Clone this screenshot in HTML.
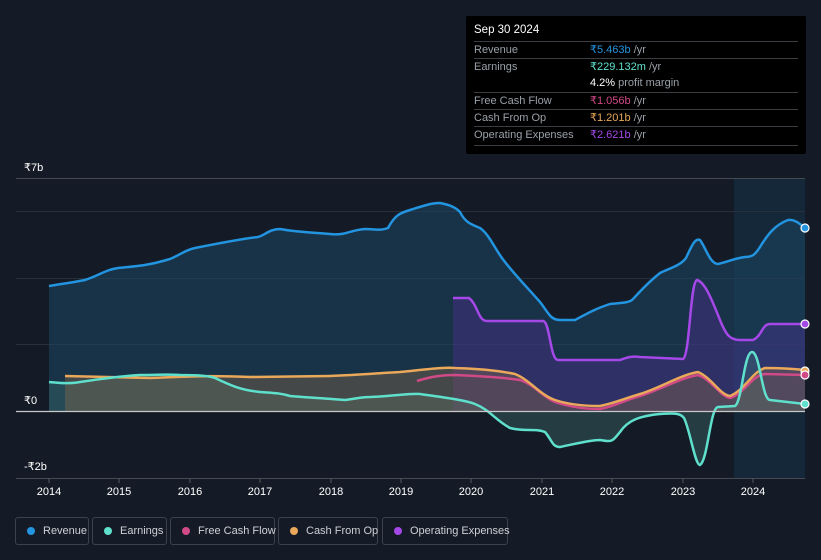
<!DOCTYPE html>
<html><head><meta charset="utf-8"><style>
body{margin:0;background:#151b26;font-family:"Liberation Sans",sans-serif;}
.wrap{position:relative;width:821px;height:560px;overflow:hidden;background:#151b26}
.tip{position:absolute;left:466px;top:16px;width:340px;height:138px;background:#000;border-radius:2px;font-size:11px;color:#9aa0a8}
.tip .h{position:absolute;left:8px;top:8px;color:#fff;font-size:11.5px}
.row{position:absolute;left:8px;width:324px;border-top:1px solid #3a3d42;height:17px;line-height:17px;white-space:nowrap}
.row .v{position:absolute;left:116px;top:0}
.leg{position:absolute;top:517px;height:28px;border:1px solid #3c424c;border-radius:3px;color:#cdd1d6;font-size:11px;line-height:27px;box-sizing:border-box;white-space:nowrap}
.leg i{position:absolute;left:11px;top:9px;width:8px;height:8px;border-radius:50%}
.leg span{position:absolute;left:27px}
</style></head><body><div class="wrap">
<svg width="821" height="560" style="position:absolute;left:0;top:0">
<defs><clipPath id="c"><rect x="16" y="178" width="789" height="300"/></clipPath></defs>
<rect x="734" y="178" width="71" height="300" fill="#14283a"/>
<g stroke="#2a303a" stroke-width="1"><line x1="16" y1="178.5" x2="805" y2="178.5" stroke="#454a52"/><line x1="16" y1="211.5" x2="805" y2="211.5"/><line x1="16" y1="278.5" x2="805" y2="278.5"/><line x1="16" y1="344.5" x2="805" y2="344.5"/><line x1="16" y1="478.5" x2="805" y2="478.5" stroke="#454a52"/></g>
<g clip-path="url(#c)">
<path d="M49,411 L49,286 C60,284 70,283 85,280 C100,275 105,270 118,268 C140,266 150,265 170,259 C180,255 185,250 195,248 C215,244 240,239 258,237 C265,235 270,229 280,229 C295,232 320,233 330,234 C345,236 350,230 365,229 C375,229 380,231 388,228 C395,215 400,213 410,210 C420,207 430,203 440,203 C450,205 455,207 460,212 C465,222 470,224 480,228 C490,235 495,250 505,262 C515,275 525,285 540,302 C548,312 550,320 560,320 L575,320 C590,312 595,309 610,304 C620,303 628,303 632,300 C640,292 645,285 660,273 C670,268 680,266 686,258 C692,245 695,238 700,240 C706,248 710,264 718,264 C728,262 735,258 745,257 C752,257 755,255 760,247 C768,234 775,225 788,220 C795,219 800,224 805,228 L805,411 Z" fill="#1c4562" fill-opacity=".55"/>
<path d="M453,411 L453,298 L469,298 C478,305 478,321 487,321 L543,321 C550,321 550,360 558,360 L620,360 C628,357 632,356 640,357 L683,359 C690,355 690,282 697,280 C705,282 712,300 720,320 C726,335 730,340 740,340 L753,340 C762,336 762,324 770,324 L805,324 L805,411 Z" fill="#5a2fa0" fill-opacity=".35"/>
<path d="M49,411 L49,382 C60,383 70,384 80,382 C100,379 120,376 140,375 C160,375 165,374 180,375 C200,375 210,376 215,378 C230,385 240,390 260,392 C275,393 280,393 290,396 C300,397 320,398 345,400 C355,399 360,397 370,397 C395,396 410,393 420,394 C440,397 465,400 475,404 C490,410 495,420 510,428 C525,432 535,428 545,432 C552,440 552,447 560,447 C575,444 590,440 600,440 C612,442 612,442 620,432 C628,420 640,416 660,414 C675,413 680,413 684,418 C690,430 695,465 700,465 C708,460 710,408 718,407 L735,406 C742,402 744,352 752,352 C760,352 762,400 770,400 L805,404 L805,411 Z" fill="#3d6e6e" fill-opacity=".4"/>
<path d="M65,411 L65,376 L150,378 C180,377 200,375 250,377 L330,376 C360,375 380,373 400,372 C430,369 445,367 455,368 C480,369 495,370 515,374 C530,380 540,395 555,400 C570,405 585,406 600,406 C615,403 620,400 640,394 C660,388 680,375 698,372 C712,378 720,395 730,396 C745,390 752,372 765,368 C780,368 795,369 805,370 L805,411 Z" fill="#8a6a4a" fill-opacity=".4"/>
<path d="M49,286 C60,284 70,283 85,280 C100,275 105,270 118,268 C140,266 150,265 170,259 C180,255 185,250 195,248 C215,244 240,239 258,237 C265,235 270,229 280,229 C295,232 320,233 330,234 C345,236 350,230 365,229 C375,229 380,231 388,228 C395,215 400,213 410,210 C420,207 430,203 440,203 C450,205 455,207 460,212 C465,222 470,224 480,228 C490,235 495,250 505,262 C515,275 525,285 540,302 C548,312 550,320 560,320 L575,320 C590,312 595,309 610,304 C620,303 628,303 632,300 C640,292 645,285 660,273 C670,268 680,266 686,258 C692,245 695,238 700,240 C706,248 710,264 718,264 C728,262 735,258 745,257 C752,257 755,255 760,247 C768,234 775,225 788,220 C795,219 800,224 805,228" fill="none" stroke="#2394df" stroke-width="2.5"/>
<path d="M453,298 L469,298 C478,305 478,321 487,321 L543,321 C550,321 550,360 558,360 L620,360 C628,357 632,356 640,357 L683,359 C690,355 690,282 697,280 C705,282 712,300 720,320 C726,335 730,340 740,340 L753,340 C762,336 762,324 770,324 L805,324" fill="none" stroke="#a548e8" stroke-width="2.5"/>
<path d="M417,381 C430,377 440,375 455,375 C480,376 500,377 520,380 C535,385 540,395 555,402 C570,407 585,409 600,409 C615,406 620,402 640,396 C660,390 680,378 698,375 C712,380 720,396 730,398 C745,393 752,375 765,374 L805,375" fill="none" stroke="#cf4a87" stroke-width="2.5"/>
<path d="M65,376 L150,378 C180,377 200,375 250,377 L330,376 C360,375 380,373 400,372 C430,369 445,367 455,368 C480,369 495,370 515,374 C530,380 540,395 555,400 C570,405 585,406 600,406 C615,403 620,400 640,394 C660,388 680,375 698,372 C712,378 720,395 730,396 C745,390 752,372 765,368 C780,368 795,369 805,370" fill="none" stroke="#e9a85a" stroke-width="2.5"/>
<path d="M49,382 C60,383 70,384 80,382 C100,379 120,376 140,375 C160,375 165,374 180,375 C200,375 210,376 215,378 C230,385 240,390 260,392 C275,393 280,393 290,396 C300,397 320,398 345,400 C355,399 360,397 370,397 C395,396 410,393 420,394 C440,397 465,400 475,404 C490,410 495,420 510,428 C525,432 535,428 545,432 C552,440 552,447 560,447 C575,444 590,440 600,440 C612,442 612,442 620,432 C628,420 640,416 660,414 C675,413 680,413 684,418 C690,430 695,465 700,465 C708,460 710,408 718,407 L735,406 C742,402 744,352 752,352 C760,352 762,400 770,400 L805,404" fill="none" stroke="#5fe0cc" stroke-width="2.5"/>
</g>
<line x1="16" y1="411.5" x2="805" y2="411.5" stroke="#c8c8c8" stroke-width="1.2"/>
<g stroke="#fff" stroke-width="1.2"><circle cx="805" cy="228" r="4" fill="#2394df"/><circle cx="805" cy="324" r="4" fill="#a548e8"/><circle cx="805" cy="371" r="4" fill="#e9a85a"/><circle cx="805" cy="375" r="4" fill="#cf4a87"/><circle cx="805" cy="404" r="4" fill="#5fe0cc"/></g>
<g stroke="#555" stroke-width="1"><line x1="49" y1="478" x2="49" y2="483"/><line x1="119" y1="478" x2="119" y2="483"/><line x1="190" y1="478" x2="190" y2="483"/><line x1="260" y1="478" x2="260" y2="483"/><line x1="331" y1="478" x2="331" y2="483"/><line x1="401" y1="478" x2="401" y2="483"/><line x1="471" y1="478" x2="471" y2="483"/><line x1="542" y1="478" x2="542" y2="483"/><line x1="612" y1="478" x2="612" y2="483"/><line x1="683" y1="478" x2="683" y2="483"/><line x1="753" y1="478" x2="753" y2="483"/></g>
<g fill="#fff" font-size="11" font-family="Liberation Sans,sans-serif" text-anchor="middle"><text x="49" y="495">2014</text><text x="119" y="495">2015</text><text x="190" y="495">2016</text><text x="260" y="495">2017</text><text x="331" y="495">2018</text><text x="401" y="495">2019</text><text x="471" y="495">2020</text><text x="542" y="495">2021</text><text x="612" y="495">2022</text><text x="683" y="495">2023</text><text x="753" y="495">2024</text></g>
<g fill="#fff" font-size="11" font-family="Liberation Sans,sans-serif"><text x="24" y="171">₹7b</text><text x="24" y="404">₹0</text><text x="24" y="470">-₹2b</text></g>
</svg>
<div class="tip"><div class="h">Sep 30 2024</div>
<div class="row" style="top:25px">Revenue<span class="v"><b style="font-weight:normal;color:#2394df">₹5.463b</b> /yr</span></div>
<div class="row" style="top:42px">Earnings<span class="v"><b style="font-weight:normal;color:#5fe0cc">₹229.132m</b> /yr</span></div>
<div class="row" style="top:59px;border-top:none"><span class="v"><b style="font-weight:normal;color:#fff">4.2%</b> profit margin</span></div>
<div class="row" style="top:76px">Free Cash Flow<span class="v"><b style="font-weight:normal;color:#cf4a87">₹1.056b</b> /yr</span></div>
<div class="row" style="top:93px">Cash From Op<span class="v"><b style="font-weight:normal;color:#e9a85a">₹1.201b</b> /yr</span></div>
<div class="row" style="top:110px">Operating Expenses<span class="v"><b style="font-weight:normal;color:#a548e8">₹2.621b</b> /yr</span></div>
<div class="row" style="top:129px;height:0"></div>
</div>
<div class="leg" style="left:15px;width:74px"><i style="background:#2394df"></i><span>Revenue</span></div>
<div class="leg" style="left:92px;width:75px"><i style="background:#5fe0cc"></i><span>Earnings</span></div>
<div class="leg" style="left:170px;width:105px"><i style="background:#cf4a87"></i><span>Free Cash Flow</span></div>
<div class="leg" style="left:278px;width:100px"><i style="background:#e9a85a"></i><span>Cash From Op</span></div>
<div class="leg" style="left:382px;width:126px"><i style="background:#a548e8"></i><span>Operating Expenses</span></div>
</div></body></html>
